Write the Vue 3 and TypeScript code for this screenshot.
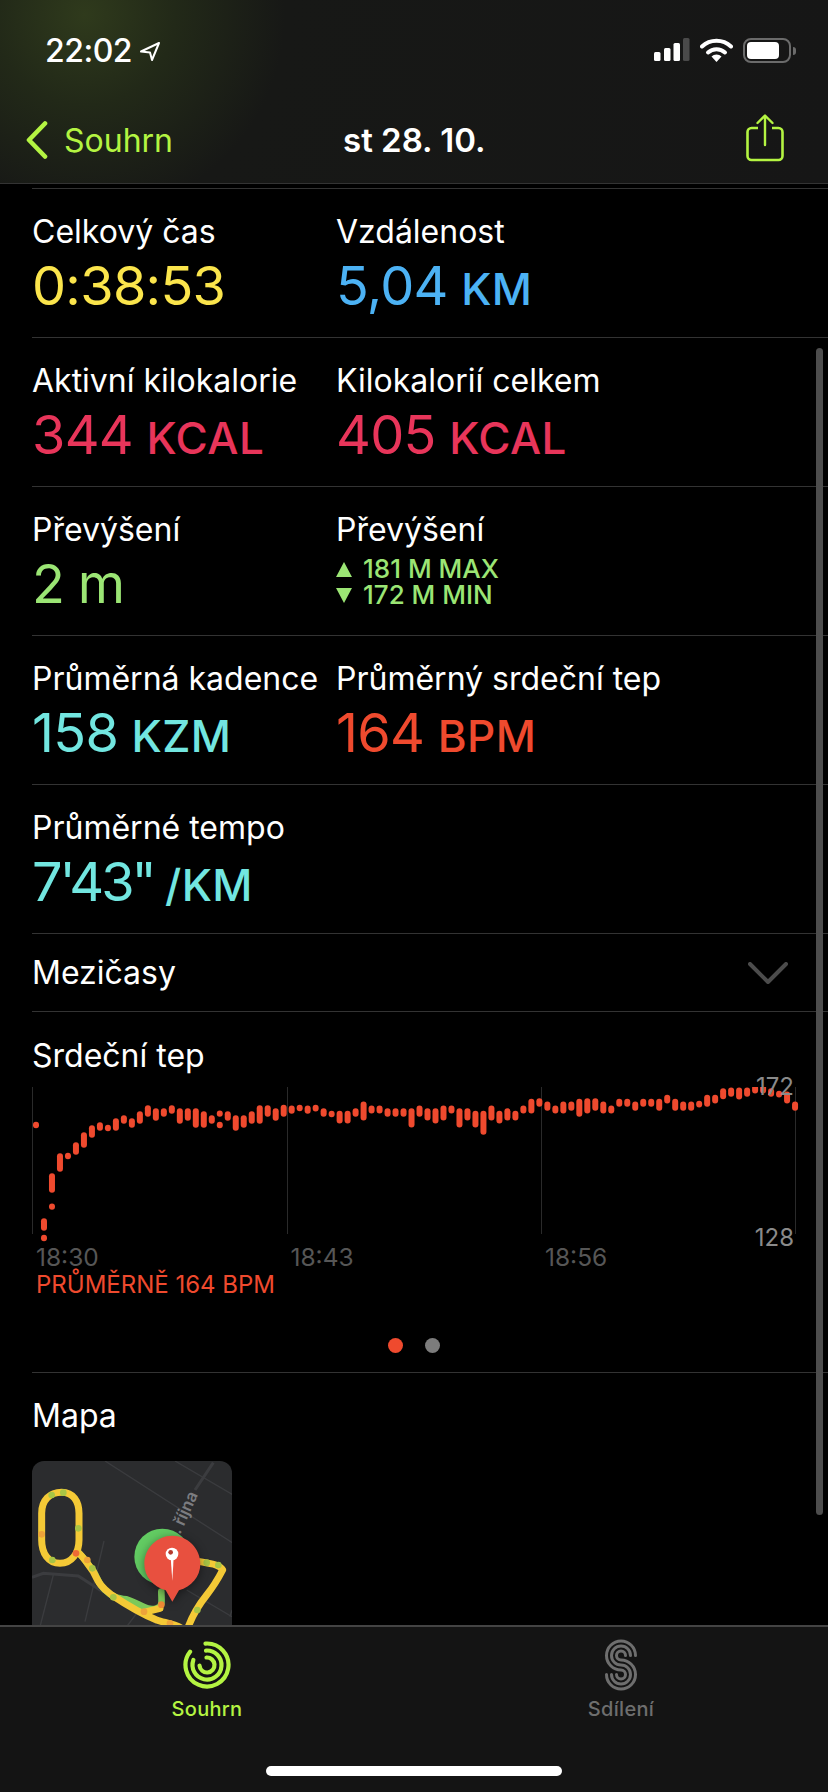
<script setup lang="ts">
type Part = { text: string; unit?: boolean; tight?: boolean }
type Stat = { label: string; color: string; value?: Part[]; range?: string[] }

const rows: Stat[][] = [
  [
    { label: 'Celkový čas', color: '#fbe54c', value: [{ text: '0:38:53' }] },
    { label: 'Vzdálenost', color: '#4cb2f4', value: [{ text: '5,04 ' }, { text: 'KM', unit: true }] },
  ],
  [
    { label: 'Aktivní kilokalorie', color: '#e8355a', value: [{ text: '344 ' }, { text: 'KCAL', unit: true }] },
    { label: 'Kilokalorií celkem', color: '#e8355a', value: [{ text: '405 ' }, { text: 'KCAL', unit: true }] },
  ],
  [
    { label: 'Převýšení', color: '#9be574', value: [{ text: '2 m' }] },
    { label: 'Převýšení', color: '#9be574', range: ['181 M MAX', '172 M MIN'] },
  ],
  [
    { label: 'Průměrná kadence', color: '#72e6e0', value: [{ text: '158 ' }, { text: 'KZM', unit: true }] },
    { label: 'Průměrný srdeční tep', color: '#ef4a2e', value: [{ text: '164 ' }, { text: 'BPM', unit: true }] },
  ],
  [{ label: 'Průměrné tempo', color: '#72e6e0', value: [{ text: '7\'43" ', tight: true }, { text: '/KM', unit: true }] }],
]

// heart rate samples, top/bottom of each bar in 1/3 px from y=1040
const samples: number[][] = [
  [246, 264], [535, 572], [400, 458], [340, 395], [340, 356], [307, 344], [277, 323], [256, 293], [247, 272], [256, 272],
  [235, 272], [226, 251], [235, 263], [214, 251], [196, 230], [205, 242], [205, 230], [196, 221], [205, 251], [205, 242],
  [205, 263], [214, 263], [226, 251], [213, 229], [214, 242], [226, 272], [226, 263], [214, 251], [196, 251], [196, 230],
  [205, 242], [195, 230], [197, 221], [196, 212], [197, 221], [197, 212], [205, 230], [213, 231], [213, 250], [213, 250],
  [205, 230], [185, 241], [197, 220], [197, 220], [205, 230], [205, 230], [205, 230], [205, 262], [197, 230], [205, 241],
  [205, 250], [197, 241], [197, 220], [205, 262], [205, 241], [213, 262], [213, 284], [197, 241], [213, 250], [205, 241],
  [213, 241], [197, 220], [177, 220], [175, 200], [185, 212], [197, 220], [185, 220], [185, 212], [177, 230], [175, 220],
  [175, 212], [185, 220], [197, 220], [177, 200], [177, 200], [185, 212], [177, 200], [177, 200], [177, 212], [165, 190],
  [177, 212], [185, 212], [185, 212], [185, 200], [165, 200], [165, 190], [145, 177], [143, 170], [143, 178], [143, 170],
  [135, 160], [132, 160], [145, 170], [155, 170], [155, 190], [185, 212],
]
// a few columns have a second, separate dot
const extras = [
  { i: 1, top: 586, bottom: 602 },
  { i: 2, top: 492, bottom: 508 },
  { i: 23, top: 247, bottom: 263 },
]
const chartTop = 1087
const bar = (i: number, top: number, bottom: number) => ({
  x: 4 + i * 7.99,
  y1: 1040 + top / 3 - chartTop + 2.8,
  y2: 1040 + bottom / 3 - chartTop - 2.8,
})
const bars = [
  ...samples.map((s, i) => bar(i, s[0], s[1])),
  ...extras.map((e) => bar(e.i, e.top, e.bottom)),
]

const arc = (r: number, from: number, to: number) => {
  const pt = (a: number) => {
    const t = ((a - 90) * Math.PI) / 180
    return `${(r * Math.cos(t)).toFixed(2)} ${(r * Math.sin(t)).toFixed(2)}`
  }
  return `M${pt(from)}A${r} ${r} 0 ${to - from > 180 ? 1 : 0} 1 ${pt(to)}`
}
const ringPaths = [arc(21.5, -4, 308), arc(14.5, -4, 290), arc(7.5, -4, 265)]

const sPath = (r: number) => {
  const q = 19 - r
  return `M${r} -9.5A${r} ${r} 0 1 0 0 ${r - 9.5}A${q} ${q} 0 1 1 ${-q} 9.5`
}
const sharePaths = [sPath(14.5), sPath(9.5), sPath(4.5)]

const routeDots = [
  { x: 155, y: 165, c: '#a8c445' }, { x: 190, y: 158, c: '#a8c445' }, { x: 235, y: 265, c: '#a8c445' },
  { x: 125, y: 283, c: '#eda33a' }, { x: 157, y: 360, c: '#a8c445' }, { x: 228, y: 340, c: '#ee6a35' },
  { x: 262, y: 360, c: '#eda33a' }, { x: 277, y: 385, c: '#a8c445' }, { x: 340, y: 472, c: '#a8c445' },
  { x: 432, y: 515, c: '#eda33a' }, { x: 484, y: 494, c: '#ee8a35' }, { x: 510, y: 550, c: '#eda33a' },
  { x: 620, y: 368, c: '#a8c445' }, { x: 655, y: 375, c: '#a8c445' }, { x: 592, y: 510, c: '#a8c445' },
]
</script>

<template>
  <div class="screen">
    <!-- top bars -->
    <header class="nav">
      <div class="status">
        <div class="clock">
          <span>22:02</span>
          <svg width="22" height="21" viewBox="0 0 22 21">
            <path d="M20 2 2 10.500l9 1 2 7.500z" fill="none" stroke="#fff" stroke-width="2" stroke-linejoin="round" />
          </svg>
        </div>
        <div class="status-icons">
          <svg width="36" height="23" viewBox="0 0 36 23">
            <rect x="0" y="14" width="6.500" height="9" rx="1.500" fill="#fff" />
            <rect x="10" y="10" width="6.500" height="13" rx="1.500" fill="#fff" />
            <rect x="19.500" y="5" width="6.500" height="18" rx="1.500" fill="#fff" />
            <rect x="29" y="0" width="6.500" height="23" rx="1.500" fill="#4a4a4a" />
          </svg>
          <svg width="33" height="24" viewBox="0 0 33 24">
            <path d="M2 8.500a21 21 0 0 1 29 0" fill="none" stroke="#fff" stroke-width="4" stroke-linecap="round" />
            <path d="M8 14.500a12.500 12.500 0 0 1 17 0" fill="none" stroke="#fff" stroke-width="4" stroke-linecap="round" />
            <path d="M11.500 18.500a7 7 0 0 1 10 0L16.500 24z" fill="#fff" />
          </svg>
          <div class="battery">
            <div class="battery-body"><div class="battery-fill"></div></div>
            <div class="battery-nub"></div>
          </div>
        </div>
      </div>
      <div class="nav-row">
        <div class="back">
          <svg width="22" height="38" viewBox="0 0 22 38">
            <path d="M19 2.500 3 19l16 16.500" fill="none" stroke="#b4f442" stroke-width="4.600" stroke-linecap="round" stroke-linejoin="round" />
          </svg>
          <span>Souhrn</span>
        </div>
        <div class="nav-title">st 28. 10.</div>
        <svg class="share" width="38" height="48" viewBox="0 0 38 48">
          <path d="M12 14H5.500a4 4 0 0 0-4 4v24a4 4 0 0 0 4 4h27a4 4 0 0 0 4-4V18a4 4 0 0 0-4-4H26" fill="none" stroke="#b4f442" stroke-width="2.600" />
          <path d="M19 31V2M11.500 9 19 1.500 26.500 9" fill="none" stroke="#b4f442" stroke-width="2.400" stroke-linecap="round" stroke-linejoin="round" />
        </svg>
      </div>
    </header>

    <main class="content">
      <div class="scrollbar"></div>
      <div class="section top-line"></div>

      <div v-for="(row, r) in rows" :key="r" class="section stat-row">
        <div v-for="stat in row" :key="stat.label + r" class="stat">
          <div class="label">{{ stat.label }}</div>
          <div v-if="stat.value" class="value" :style="{ color: stat.color }">
            <span v-for="part in stat.value" :key="part.text" :class="{ unit: part.unit, tight: part.tight }">{{ part.text }}</span>
          </div>
          <div v-else class="range" :style="{ color: stat.color }">
            <div class="range-line"><i class="tri up"></i>{{ stat.range?.[0] }}</div>
            <div class="range-line"><i class="tri down"></i>{{ stat.range?.[1] }}</div>
          </div>
        </div>
      </div>

      <div class="section splits">
        <div class="label">Mezičasy</div>
        <svg width="40" height="22" viewBox="0 0 40 22">
          <path d="M2 2 20 20 38 2" fill="none" stroke="#4c4c4c" stroke-width="4" stroke-linecap="round" stroke-linejoin="round" />
        </svg>
      </div>

      <div class="section heart">
        <div class="label">Srdeční tep</div>
        <div class="chart">
          <svg width="768" height="160" viewBox="0 0 768 160">
            <line v-for="x in [0.5, 255.5, 509.5, 763.5]" :key="x" :x1="x" :x2="x" y1="0" y2="147" stroke="#2a2a2a" />
            <line
              v-for="(b, i) in bars"
              :key="i"
              :x1="b.x"
              :x2="b.x"
              :y1="b.y1"
              :y2="b.y2"
              stroke="#ef4a2e"
              stroke-width="6"
              stroke-linecap="round"
            />
          </svg>
          <span class="scale scale-max">172</span>
          <span class="scale scale-min">128</span>
        </div>
        <div class="times">
          <span>18:30</span>
          <span>18:43</span>
          <span>18:56</span>
        </div>
        <div class="avg">PRŮMĚRNĚ 164 BPM</div>
        <div class="dots">
          <i class="dot on"></i>
          <i class="dot"></i>
        </div>
      </div>

      <div class="section map-section">
        <div class="label">Mapa</div>
        <div class="map">
          <svg width="200" height="190" viewBox="96 63 600 570">
            <g fill="none" stroke="#3b3c3f" stroke-width="4">
              <path d="M315 63 700 310" />
              <path d="M525 63 700 165" />
              <path d="M560 450 696 530" />
              <path d="M312 303 255 545" />
              <path d="M160 405 120 560" />
              <path d="M640 68 585 150" stroke-width="9" />
              <path d="M96 412 130 400 235 408 300 450 370 480 470 550" stroke-width="9" />
              <path d="M410 520 380 560" />
              <path d="M696 510 690 530" />
            </g>
            <text x="0" y="0" class="street" transform="translate(540 285) rotate(-66)">. října</text>
            <g fill="none" stroke-linecap="round" stroke-linejoin="round">
              <path d="M484 455C484 480 490 500 470 505 440 515 420 490 380 478 350 475 335 470 315 450 290 425 290 400 270 380 255 360 245 345 232 335" stroke="#7cc95a" stroke-width="20" />
              <path d="M125 270V220C125 180 150 157 185 157 220 157 237 185 237 220V300C237 340 215 370 180 370 145 370 125 340 125 300ZM232 335C250 350 265 375 280 395 295 425 300 440 335 465 380 495 420 520 470 540 490 548 520 550 545 565M440 515 480 505M565 560C580 520 600 490 620 465 640 440 655 415 668 390 660 375 640 372 600 365" stroke="#f4c936" stroke-width="21" />
            </g>
            <circle v-for="(d, i) in routeDots" :key="i" :cx="d.x" :cy="d.y" r="10" :fill="d.c" />
            <circle cx="487" cy="350" r="84" fill="#62cb62" />
            <g class="pin-shadow">
              <path d="M517 485 497 451C460 440 433 410 433 371 433 325 471 287 517 287 563 287 601 325 601 371 601 410 574 440 537 451Z" fill="#e8503f" />
            </g>
            <path d="M512 352 517 422 521 352Z" fill="#fff" />
            <circle cx="516" cy="342" r="19" fill="#fff" />
            <circle cx="512" cy="337" r="7" fill="#b53a2e" />
          </svg>
        </div>
      </div>
    </main>

    <footer class="tabs">
      <div class="tab-row">
        <div class="tab active">
          <svg width="52" height="52" viewBox="-26 -26 52 52">
            <path v-for="d in ringPaths" :key="d" :d="d" fill="none" stroke="#b4f442" stroke-width="4.200" stroke-linecap="round" />
          </svg>
          <span>Souhrn</span>
        </div>
        <div class="tab">
          <svg width="52" height="52" viewBox="-26 -26 52 52">
            <path v-for="d in sharePaths" :key="d" :d="d" fill="none" stroke="#6e6e6e" stroke-width="3" stroke-linecap="round" />
          </svg>
          <span>Sdílení</span>
        </div>
      </div>
      <div class="home-bar"></div>
    </footer>
  </div>
</template>

<style>
html,
body {
  margin: 0;
  background: #000;
}
</style>

<style scoped>
.screen {
  width: 828px;
  height: 1792px;
  display: flex;
  flex-direction: column;
  overflow: hidden;
  background: #000;
  color: #fff;
  font-family: Inter, "Liberation Sans", sans-serif;
}

/* --- Nav --- */
.nav {
  height: 184px;
  flex: none;
  box-sizing: border-box;
  border-bottom: 1px solid #333;
  background: radial-gradient(circle at 85px 15px, #2f3a1c 0, #222918 90px, #171816 200px, #161616 100%);
}

.status {
  height: 109px;
  box-sizing: border-box;
  padding: 38px 32px 0 45px;
  display: flex;
  justify-content: space-between;
}

.clock {
  display: flex;
  align-items: flex-start;
  gap: 7px;
  font-size: 32px;
  line-height: 26px;
  font-weight: 500;
  letter-spacing: -0.5px;
}

.clock svg {
  margin-top: 3px;
}

.status-icons {
  display: flex;
  gap: 10px;
  height: 25px;
}

.battery {
  display: flex;
  align-items: center;
  gap: 2px;
}

.battery-body {
  width: 48px;
  height: 25px;
  box-sizing: border-box;
  border: 2px solid #6b6b6b;
  border-radius: 8px;
  padding: 2px;
}

.battery-fill {
  width: 32px;
  height: 17px;
  background: #fff;
  border-radius: 4px;
}

.battery-nub {
  width: 3px;
  height: 8px;
  background: #6b6b6b;
  border-radius: 0 3px 3px 0;
}

.nav-row {
  position: relative;
  height: 62px;
  display: flex;
  align-items: center;
  justify-content: space-between;
  padding: 0 44px 0 26px;
}

.back {
  display: flex;
  align-items: center;
  gap: 16px;
  color: #b4f442;
  font-size: 32px;
}

.nav-title {
  position: absolute;
  left: 343px;
  font-size: 33px;
  font-weight: 600;
}

.share {
  margin-top: -4px;
}

/* --- Content --- */
.content {
  position: relative;
  flex: 1;
  min-height: 0;
  overflow: hidden;
}

.scrollbar {
  position: absolute;
  right: 5px;
  top: 164px;
  width: 7px;
  height: 1167px;
  border-radius: 4px;
  background: #4d4d4d;
}

.section {
  margin-left: 32px;
  border-bottom: 1px solid #333;
}

.top-line {
  height: 4px;
}

.stat-row {
  height: 149px;
  box-sizing: border-box;
  display: grid;
  grid-template-columns: 304px 1fr;
  padding-top: 24px;
}

.label {
  font-size: 32px;
  line-height: 38px;
  white-space: nowrap;
}

.value {
  margin-top: 3px;
  font-size: 54px;
  line-height: 64px;
  letter-spacing: -0.7px;
  word-spacing: -1px;
  white-space: nowrap;
}

.unit {
  font-size: 44px;
  font-weight: 500;
  letter-spacing: 0.4px;
}

.tight {
  letter-spacing: -3px;
}

.range {
  margin-top: 7px;
  font-size: 26px;
  line-height: 26px;
  font-weight: 500;
}

.range-line {
  display: flex;
  align-items: center;
  gap: 11px;
}

.tri {
  width: 0;
  height: 0;
  border-left: 8.500px solid transparent;
  border-right: 8.500px solid transparent;
}

.tri.up {
  border-bottom: 15px solid currentColor;
}

.tri.down {
  border-top: 15px solid currentColor;
}

.splits {
  height: 77px;
  display: flex;
  align-items: center;
  justify-content: space-between;
  padding-right: 40px;
}

.heart {
  height: 361px;
  padding-top: 25px;
  box-sizing: border-box;
}

.chart {
  position: relative;
  height: 162px;
  margin-top: 12px;
}

.chart svg {
  display: block;
}

.scale {
  position: absolute;
  right: 34px;
  font-size: 24px;
  color: #8a8a8a;
}

.scale-max {
  top: -15px;
}

.scale-min {
  top: 136px;
}

.times {
  display: flex;
  margin-top: -6px;
  padding-left: 4px;
  font-size: 24.500px;
  line-height: 28px;
  color: #565656;
}

.times span {
  width: 254.500px;
}

.avg {
  padding-left: 4px;
  font-size: 24px;
  line-height: 28px;
  color: #ef4a2e;
}

.dots {
  display: flex;
  justify-content: center;
  gap: 22px;
  margin-top: 39px;
  padding-right: 32px;
}

.dot {
  width: 15px;
  height: 15px;
  border-radius: 50%;
  background: #7c7c7c;
}

.dot.on {
  background: #ef4a2e;
}

.map-section {
  border-bottom: none;
  padding-top: 24px;
}

.map {
  width: 200px;
  height: 190px;
  margin-top: 26px;
  overflow: hidden;
  border-radius: 12px;
  background: #2b2c2e;
}

.map svg {
  display: block;
}

.street {
  font-size: 50px;
  font-weight: 600;
  fill: #7b7c80;
}

.pin-shadow {
  filter: drop-shadow(0 6px 14px rgba(0, 0, 0, 0.45));
}

/* --- Tab bar --- */
.tabs {
  position: relative;
  height: 167px;
  flex: none;
  box-sizing: border-box;
  border-top: 2px solid #444;
  background: #141414;
}

.tab-row {
  display: flex;
  padding-top: 12px;
}

.tab {
  width: 414px;
  display: flex;
  flex-direction: column;
  align-items: center;
  gap: 6px;
  color: #6e6e6e;
  font-size: 20px;
  font-weight: 500;
  letter-spacing: 0.3px;
}

.tab.active {
  color: #b4f442;
}

.home-bar {
  position: absolute;
  left: 266px;
  bottom: 16px;
  width: 296px;
  height: 10px;
  border-radius: 5px;
  background: #fff;
}
</style>
